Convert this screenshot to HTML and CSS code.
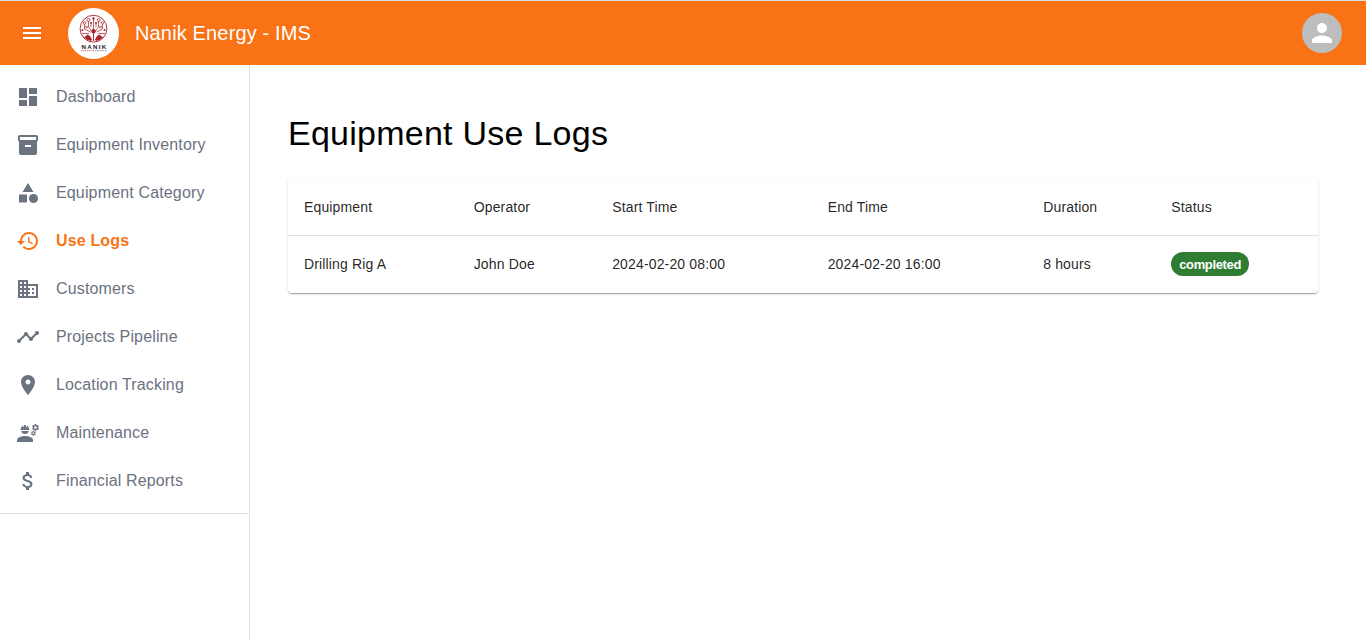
FILE: index.html
```html
<!DOCTYPE html>
<html lang="en">
<head>
<meta charset="utf-8">
<title>Nanik Energy - IMS</title>
<link rel="stylesheet" href="styles.css">
</head>
<body>
<header class="appbar">
  <button class="menu-button" aria-label="Menu"><svg class="icon" viewBox="0 0 24 24"><path d="M3 18h18v-2H3v2zm0-5h18v-2H3v2zm0-7v2h18V6H3z"/></svg></button>
  <svg class="logo" viewBox="0 0 51 51">
    <circle cx="25.5" cy="25.5" r="25.5" fill="#fff"/>
    <g fill="none" stroke="#b0343b" stroke-width=".8">
      <circle cx="25.5" cy="20.700" r="13.400" stroke-width="1"/>
      <path d="M25.500 24V10M23.500 23l-3-4v-6M27.500 23l3-4v-6M22.500 24l-6-3v-5M28.500 24l6-3v-5M21 25.500h-7M30 25.500h7M23 19v-5M28 19v-5"/>
      <circle cx="20.300" cy="12" r="1.500"/><circle cx="30.700" cy="12" r="1.500"/>
      <circle cx="16.500" cy="15" r="1.300"/><circle cx="34.500" cy="15" r="1.300"/>
      <circle cx="18.500" cy="19" r="1"/><circle cx="32.500" cy="19" r="1"/>
    </g>
    <g fill="#a9262d">
      <circle cx="25.500" cy="23.200" r="2.200"/><circle cx="25.500" cy="10.500" r="1.200"/>
      <circle cx="14.500" cy="22" r="1"/><circle cx="36.500" cy="22" r="1"/>
      <circle cx="23" cy="15" r=".9"/><circle cx="28" cy="15" r=".9"/>
      <path d="M16 29.500l3.500-3 2.500 1.500 2 3.500-1 1.600q-4-.7-7-3.600zM35 29.500l-3.500-3-2.500 1.500-2 3.500 1 1.600q4-.7 7-3.600z"/>
      <path d="M25 24h1v9h-1z"/>
    </g>
    <text class="logo-name" x="13.600" y="40.900" textLength="24.500" lengthAdjust="spacing">NANIK</text>
    <path d="M13 42.700h13" stroke="#c4686d" stroke-width=".8" stroke-dasharray="1.500 .4"/>
    <path d="M27 42.700h12" stroke="#888" stroke-width=".8" stroke-dasharray="1.500 .4"/>
  </svg>
  <div class="brand">Nanik Energy - IMS</div>
  <div class="avatar"><svg viewBox="0 0 24 24"><path d="M12 12c2.210 0 4-1.790 4-4s-1.790-4-4-4-4 1.790-4 4 1.790 4 4 4zm0 2c-2.670 0-8 1.340-8 4v2h16v-2c0-2.660-5.330-4-8-4z"/></svg></div>
</header>
<div class="layout">
  <nav class="sidebar">
    <ul class="nav-list">
      <li class="nav-item"><svg class="icon" viewBox="0 0 24 24"><path d="M3 13h8V3H3v10zm0 8h8v-6H3v6zm10 0h8V11h-8v10zm0-18v6h8V3h-8z"/></svg><span>Dashboard</span></li>
      <li class="nav-item"><svg class="icon" viewBox="0 0 24 24"><path d="M20 2H4c-1 0-2 .9-2 2v3.010c0 .72.43 1.340 1 1.690V20c0 1.100 1.100 2 2 2h14c.9 0 2-.9 2-2V8.700c.57-.35 1-.97 1-1.690V4c0-1.100-1-2-2-2zm-5 12H9v-2h6v2zm5-7H4V4l16-.02V7z"/></svg><span>Equipment Inventory</span></li>
      <li class="nav-item"><svg class="icon" viewBox="0 0 24 24"><path d="M12 2l-5.500 9h11z"/><circle cx="17.500" cy="17.500" r="4.500"/><path d="M3 13.500h8v8H3z"/></svg><span>Equipment Category</span></li>
      <li class="nav-item active"><svg class="icon" viewBox="0 0 24 24"><path d="M13 3c-4.970 0-9 4.030-9 9H1l3.890 3.890.07.14L9 12H6c0-3.870 3.130-7 7-7s7 3.130 7 7-3.130 7-7 7c-1.930 0-3.680-.79-4.940-2.060l-1.420 1.420C8.270 19.990 10.510 21 13 21c4.970 0 9-4.030 9-9s-4.030-9-9-9zm-1 5v5l4.280 2.540.72-1.210-3.500-2.080V8H12z"/></svg><span>Use Logs</span></li>
      <li class="nav-item"><svg class="icon" viewBox="0 0 24 24"><path d="M12 7V3H2v18h20V7H12zM6 19H4v-2h2v2zm0-4H4v-2h2v2zm0-4H4V9h2v2zm0-4H4V5h2v2zm4 12H8v-2h2v2zm0-4H8v-2h2v2zm0-4H8V9h2v2zm0-4H8V5h2v2zm10 12h-8v-2h2v-2h-2v-2h2v-2h-2V9h8v10zm-2-8h-2v2h2v-2zm0 4h-2v2h2v-2z"/></svg><span>Customers</span></li>
      <li class="nav-item"><svg class="icon" viewBox="0 0 24 24"><path d="M23 8c0 1.100-.9 2-2 2-.18 0-.35-.02-.51-.07l-3.560 3.550c.05.16.07.34.07.52 0 1.100-.9 2-2 2s-2-.9-2-2c0-.18.02-.36.07-.52l-2.550-2.550c-.16.05-.34.07-.52.07s-.36-.02-.52-.07l-4.550 4.560c.05.16.07.33.07.51 0 1.100-.9 2-2 2s-2-.9-2-2 .9-2 2-2c.18 0 .35.02.51.07l4.560-4.550C8.020 9.360 8 9.180 8 9c0-1.100.9-2 2-2s2 .9 2 2c0 .18-.02.36-.07.52l2.550 2.550c.16-.05.34-.07.52-.07s.36.02.52.07l3.550-3.560C19.020 8.350 19 8.180 19 8c0-1.100.9-2 2-2s2 .9 2 2z"/></svg><span>Projects Pipeline</span></li>
      <li class="nav-item"><svg class="icon" viewBox="0 0 24 24"><path d="M12 2C8.130 2 5 5.130 5 9c0 5.250 7 13 7 13s7-7.750 7-13c0-3.870-3.130-7-7-7zm0 9.500c-1.380 0-2.500-1.120-2.500-2.500s1.120-2.500 2.500-2.500 2.500 1.120 2.500 2.500-1.120 2.500-2.500 2.500z"/></svg><span>Location Tracking</span></li>
      <li class="nav-item"><svg class="icon" viewBox="0 0 24 24"><path d="M9 15c-2.670 0-8 1.340-8 4v2h16v-2c0-2.660-5.330-4-8-4zM4.740 9h8.520c.27 0 .49-.22.49-.49v-.02c0-.27-.22-.49-.49-.49H13c0-1.480-.81-2.750-2-3.450v.95c0 .28-.22.5-.5.5s-.5-.22-.5-.5V4.140C9.680 4.060 9.350 4 9 4s-.68.06-1 .14V5.500c0 .28-.22.5-.5.5S7 5.780 7 5.500v-.95C5.810 5.250 5 6.520 5 8h-.26c-.27 0-.49.22-.49.49v.03c0 .26.22.48.49.48zM9 13c1.860 0 3.410-1.280 3.860-3H5.140c.45 1.720 2 3 3.860 3z"/><path id="gear" d="M22.100 6.840c.01-.11.02-.22.02-.34 0-.12-.01-.23-.03-.34l.74-.58c.07-.05.08-.15.04-.22l-.7-1.210c-.04-.08-.14-.1-.21-.08l-.86.35c-.18-.14-.38-.25-.59-.34l-.13-.93c-.02-.09-.09-.15-.18-.15h-1.400c-.09 0-.16.06-.17.15l-.13.93c-.21.09-.41.21-.59.34l-.87-.35c-.08-.03-.17 0-.21.08l-.7 1.210c-.04.08-.03.17.04.22l.74.58c-.02.11-.03.23-.03.34 0 .11.01.23.03.34l-.74.58c-.07.05-.08.15-.04.22l.7 1.210c.04.08.14.1.21.08l.87-.35c.18.14.38.25.59.34l.13.93c.01.09.08.15.17.15h1.400c.09 0 .16-.06.17-.15l.13-.93c.21-.09.41-.21.59-.34l.87.35c.08.03.17 0 .21-.08l.7-1.210c.04-.08.03-.17-.04-.22l-.73-.58zm-2.600.91c-.69 0-1.250-.56-1.250-1.250s.56-1.250 1.250-1.250 1.250.56 1.250 1.250-.56 1.250-1.250 1.250z"/><use href="#gear" transform="translate(17.420 12.210) scale(.7) translate(-19.500 -6.500)"/></svg><span>Maintenance</span></li>
      <li class="nav-item"><svg class="icon" viewBox="0 0 24 24"><path d="M11.800 10.900c-2.270-.59-3-1.200-3-2.150 0-1.090 1.010-1.850 2.700-1.850 1.780 0 2.440.85 2.500 2.100h2.210c-.07-1.720-1.120-3.300-3.210-3.810V3h-3v2.160c-1.940.42-3.500 1.680-3.500 3.610 0 2.310 1.910 3.460 4.700 4.130 2.500.6 3 1.480 3 2.410 0 .69-.49 1.790-2.700 1.790-2.060 0-2.870-.92-2.980-2.100h-2.200c.12 2.190 1.760 3.420 3.680 3.830V21h3v-2.150c1.950-.37 3.500-1.500 3.500-3.550 0-2.840-2.430-3.810-4.700-4.400z"/></svg><span>Financial Reports</span></li>
    </ul>
  </nav>
  <main class="content">
    <h1 class="page-title">Equipment Use Logs</h1>
    <div class="card">
      <table class="log-table">
        <colgroup><col class="col-equipment"><col class="col-operator"><col class="col-time"><col class="col-time"><col class="col-duration"><col></colgroup>
        <thead><tr><th>Equipment</th><th>Operator</th><th>Start Time</th><th>End Time</th><th>Duration</th><th>Status</th></tr></thead>
        <tbody><tr><td>Drilling Rig A</td><td>John Doe</td><td>2024-02-20 08:00</td><td>2024-02-20 16:00</td><td>8 hours</td><td><span class="chip">completed</span></td></tr></tbody>
      </table>
    </div>
  </main>
</div>
</body>
</html>
```
FILE: styles.css
```css
* { box-sizing: border-box; }
body {
  margin: 0;
  height: 100vh;
  display: flex;
  flex-direction: column;
  overflow: hidden;
  background: #fff;
  color: #000;
  font-family: "Liberation Sans", Arial, sans-serif;
}
.icon { width: 24px; height: 24px; fill: currentColor; flex: none; display: block; }
.appbar {
  flex: none;
  height: 65px;
  display: flex;
  align-items: center;
  padding: 0 24px 0 20px;
  border-top: 1px solid #dcdfe1;
  background: #f97316;
  color: #fff;
}
.menu-button { border: 0; padding: 0; background: none; color: inherit; }
.logo { width: 51px; height: 51px; margin-left: 24px; flex: none; }
.logo-name { font-size: 6.2px; font-weight: 700; fill: #222; }
.brand { margin-left: 16px; font-size: 20px; line-height: 32px; letter-spacing: 0.15px; }
.avatar {
  width: 40px;
  height: 40px;
  margin-left: auto;
  display: grid;
  place-items: center;
  border-radius: 50%;
  background: #bdbdbd;
}
.avatar svg { width: 30px; height: 30px; fill: #fff; }
.layout { flex: 1; display: flex; min-height: 0; }
.sidebar { width: 250px; flex: none; border-right: 1px solid #e0e0e0; }
.nav-list { list-style: none; margin: 0; padding: 8px 0; border-bottom: 1px solid #e0e0e0; }
.nav-item {
  height: 48px;
  display: flex;
  align-items: center;
  gap: 16px;
  padding: 0 16px;
  color: #6b7280;
  font-size: 16px;
  line-height: 24px;
  letter-spacing: 0.15px;
}
.nav-item.active { color: #f97316; font-weight: 700; }
.content { flex: 1; padding: 47px 48px 0 38px; }
.page-title { margin: 0 0 25px; font-size: 34px; font-weight: 400; line-height: 42px; letter-spacing: 0.25px; }
.card {
  border-radius: 4px;
  background: #fff;
  box-shadow: 0 2px 1px -1px rgba(0,0,0,.2), 0 1px 1px rgba(0,0,0,.14), 0 1px 3px rgba(0,0,0,.12);
}
.log-table { width: 100%; table-layout: fixed; border-collapse: separate; border-spacing: 0; font-size: 14px; letter-spacing: 0.15px; color: rgba(0,0,0,.87); }
.log-table th, .log-table td { height: 57px; padding: 0 16px; text-align: left; font-weight: 400; vertical-align: middle; }
.log-table th { border-bottom: 1px solid #e0e0e0; }
.log-table td { border-bottom: 1px solid transparent; }
.col-equipment { width: 169.7px; }
.col-operator { width: 138.5px; }
.col-time { width: 215.5px; }
.col-duration { width: 128px; }
.chip {
  display: inline-flex;
  align-items: center;
  height: 24px;
  padding: 0 8px;
  border-radius: 12px;
  background: #2e7d32;
  color: #fff;
  font-size: 13px;
  font-weight: 700;
  letter-spacing: -0.35px;
  vertical-align: middle;
}
```
